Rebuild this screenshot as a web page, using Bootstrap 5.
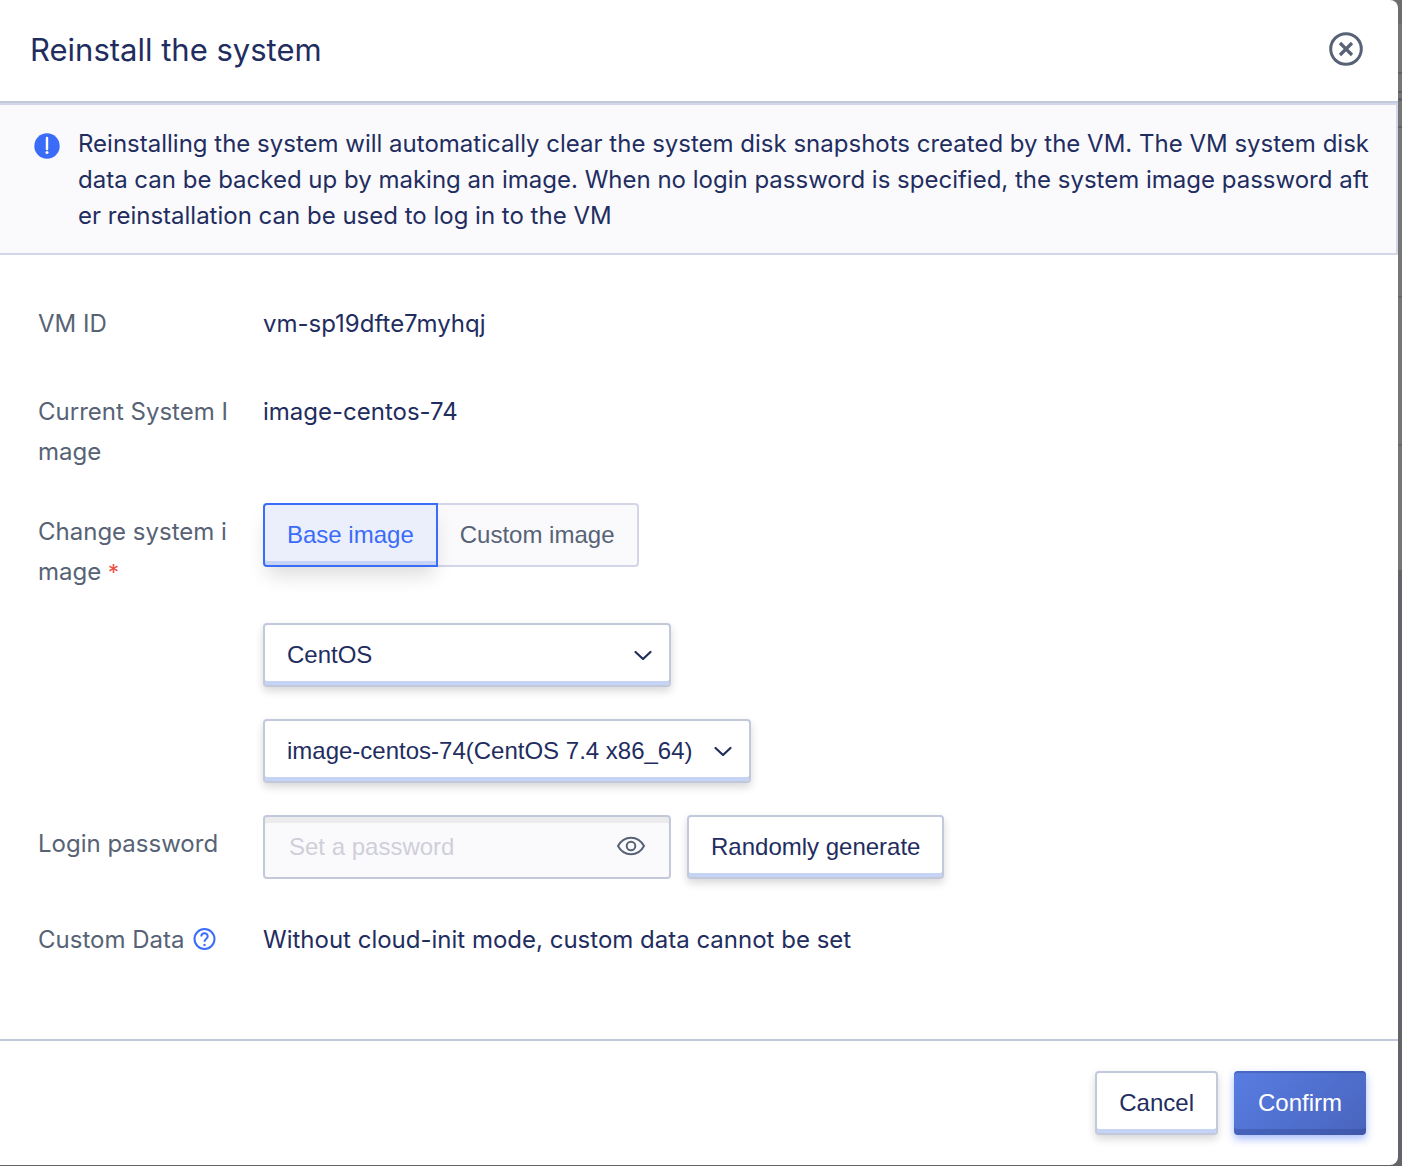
<!DOCTYPE html>
<html lang="en">
<head>
<meta charset="utf-8">
<meta name="viewport" content="width=device-width, initial-scale=1">
<title>Reinstall the system</title>
<link rel="stylesheet" href="https://cdn.jsdelivr.net/npm/bootstrap@5.3.0/dist/css/bootstrap.min.css">
<style>
  :root { --navy: #1f2d5f; --slate: #576375; --blue: #3b6cf8; --line: #c3c9da; --soft-line: #d3d6e9; --soft: #fafafd; --lip: #c5d3f5; }
  body { font-family: Inter, "Liberation Sans", sans-serif; font-size: 24px; line-height: 40px; color: var(--navy);
    background: linear-gradient(#6c6d6f 0 24px, #757676 24px 72px, #5f6265 72px 74px, #757676 74px 91px, #5f6265 91px 93px, #757676 93px 98px, #5f6265 98px 101px, #757676 101px 126px, #5f6265 126px 128px, #757676 128px 296px, #66686b 296px 298px, #757676 298px 444px, #66686b 444px 446px, #757676 446px 570px, #636468 570px) no-repeat #636468; }
  .backdrop { padding: 0 4px 1px 0; }
  .dialog { background: #fff; border-radius: 0 8px 8px 0; overflow: hidden; }
  .dialog-head { padding: 0 32px 0 30px; height: 103px; border-bottom: 2px solid var(--line); }
  .dialog-head h1 { font-size: 31px; line-height: 40px; font-weight: 400; padding-bottom: 2px; }
  .notice { padding: 21px 28px 19px 34px; gap: 18px; line-height: 36px; background: var(--soft); border: 2px solid var(--soft-line); border-left: 0; }
  .notice svg { margin-top: 7px; }
  .notice p { white-space: nowrap; }
  .dialog-body { padding: 40px 38px 71px; gap: 31px; }
  .field-label { width: 225px; padding-top: 9px; color: var(--slate); white-space: nowrap; }
  .field-text { padding: 9px 0 8px; }
  .field-controls { margin-bottom: 1px; }
  .required { color: #ee4f43; font-size: 22px; }
  .control { height: 64px; font-family: "Liberation Sans", Arial, sans-serif; font-size: 24px; line-height: 36px; color: var(--navy); border: 2px solid var(--line); border-radius: 4px; padding: 12px 22px; }
  .raised { background-color: #fff; box-shadow: inset 0 -4px var(--lip), 0 4px 8px rgba(0,0,0,.16); }
  .form-select.raised { padding-right: 56px; background-image: url("data:image/svg+xml,%3Csvg xmlns='http://www.w3.org/2000/svg' viewBox='0 0 20 20'%3E%3Cpath d='M2.500 7 10 14l7.500-7' fill='none' stroke='%231f2d5f' stroke-width='2.200' stroke-linecap='round' stroke-linejoin='round'/%3E%3C/svg%3E"); background-size: 20px 20px; background-position: right 16px center; }
  .select-os, .password-box { width: 408px; }
  .select-image { width: 488px; }
  .form-select.select-image { padding-right: 50px; }
  .segment { margin-bottom: 56px; }
  .segment .btn { flex: none; border-color: var(--soft-line); background: var(--soft); color: var(--slate); }
  .segment .btn-check:checked + .btn { border-color: var(--blue); background: #ebeffc; color: var(--blue); box-shadow: inset 0 -4px var(--lip), 0 12px 20px -4px rgba(0,0,0,.14); }
  .segment .btn:last-child { border-left: 0; margin-left: 0; padding: 12px 23px; }
  .password-box .control { background: var(--soft); padding-left: 24px; padding-right: 64px; box-shadow: inset 0 6px #ececef; }
  .password-box .control::placeholder { color: #cfcfd9; opacity: 1; }
  .eye { right: 25px; top: 17px; }
  .dialog-foot { padding: 30px 32px; border-top: 2px solid var(--line); }
  .confirm { border: 0; padding: 14px 24px; color: #fff; background: linear-gradient(135deg, #587de2, #4964bd); box-shadow: inset 0 2px rgba(40,60,130,.3), inset 0 -6px rgba(40,60,130,.3), 0 4px 8px rgba(59,108,248,.45); }
  .btn.confirm:hover { color: #fff; background: #4964bd; }
</style>
<script src="https://cdn.jsdelivr.net/npm/bootstrap@5.3.0/dist/js/bootstrap.bundle.min.js"></script>
</head>
<body>
<div class="backdrop">
<main class="dialog">
  <header class="dialog-head d-flex align-items-center justify-content-between">
    <h1 class="m-0">Reinstall the system</h1>
    <button type="button" class="btn p-0 border-0 d-flex" aria-label="Close">
      <svg width="40" height="40" viewBox="0 0 40 40" fill="none" stroke="#576375" stroke-width="3" aria-hidden="true"><circle cx="20" cy="18" r="15.300"/><path d="m14 12 12 12M26 12 14 24" stroke-width="3.200"/></svg>
    </button>
  </header>
  <div class="notice d-flex align-items-start" role="note">
    <svg class="flex-shrink-0" width="26" height="26" viewBox="0 0 26 26" aria-hidden="true"><circle cx="13" cy="13" r="12.700" fill="#3b6cf8"/><path d="M13 5v11" stroke="#fff" stroke-width="2.400" stroke-linecap="round"/><circle cx="13" cy="19.500" r="1.500" fill="#fff"/></svg>
    <p class="m-0">Reinstalling the system will automatically clear the system disk snapshots created by the VM. The VM system disk<br>data can be backed up by making an image. When no login password is specified, the system image password aft<br>er reinstallation can be used to log in to the VM</p>
  </div>
  <form>
    <div class="dialog-body d-flex flex-column">
      <div class="d-flex">
        <div class="field-label flex-shrink-0">VM ID</div>
        <div class="field-text">vm-sp19dfte7myhqj</div>
      </div>
      <div class="d-flex">
        <div class="field-label flex-shrink-0">Current System I<br>mage</div>
        <div class="field-text">image-centos-74</div>
      </div>
      <div class="d-flex">
        <label class="field-label flex-shrink-0" for="os">Change system i<br>mage <span class="required">*</span></label>
        <div class="field-controls d-flex flex-column align-items-start">
          <div class="segment btn-group" role="group" aria-label="Image type">
            <input type="radio" class="btn-check" name="kind" id="kind-base" checked>
            <label class="btn control" for="kind-base">Base image</label>
            <input type="radio" class="btn-check" name="kind" id="kind-custom">
            <label class="btn control" for="kind-custom">Custom image</label>
          </div>
          <select class="form-select control raised select-os mb-3" id="os"><option>CentOS</option></select>
          <select class="form-select control raised select-image mt-3" aria-label="System image"><option>image-centos-74(CentOS 7.4 x86_64)</option></select>
        </div>
      </div>
      <div class="d-flex">
        <label class="field-label flex-shrink-0" for="password">Login password</label>
        <div class="field-controls d-flex gap-3">
          <div class="password-box position-relative">
            <input type="password" class="form-control control" id="password" placeholder="Set a password">
            <button type="button" class="eye btn p-0 border-0 position-absolute d-flex" aria-label="Show password">
              <svg width="30" height="28" viewBox="0 0 30 28" fill="none" stroke="#576375" stroke-width="2" aria-hidden="true"><path d="M2 14C5 8.500 10 5.700 15 5.700S25 8.500 28 14c-3 5.500-8 8.300-13 8.300S5 19.500 2 14z"/><circle cx="15" cy="14" r="4.300"/></svg>
            </button>
          </div>
          <button type="button" class="btn control raised">Randomly generate</button>
        </div>
      </div>
      <div class="d-flex align-items-start">
        <div class="field-label flex-shrink-0 d-flex align-items-center gap-2">Custom Data
          <svg width="24" height="24" viewBox="0 0 24 24" fill="none" stroke="#3b6cf8" stroke-width="2" role="img" aria-label="Help"><circle cx="12.500" cy="11" r="10"/><path d="M9.300 8.600c0-4.400 6.400-4.400 6.400-.4 0 2.500-3.200 2.900-3.200 5.600"/><circle cx="12.500" cy="17" r="1.200" fill="#3b6cf8" stroke="none"/></svg>
        </div>
        <div class="field-text">Without cloud-init mode, custom data cannot be set</div>
      </div>
    </div>
    <footer class="dialog-foot d-flex justify-content-end gap-3">
      <button type="button" class="btn control raised">Cancel</button>
      <button type="submit" class="btn control confirm">Confirm</button>
    </footer>
  </form>
</main>
</div>
</body>
</html>
